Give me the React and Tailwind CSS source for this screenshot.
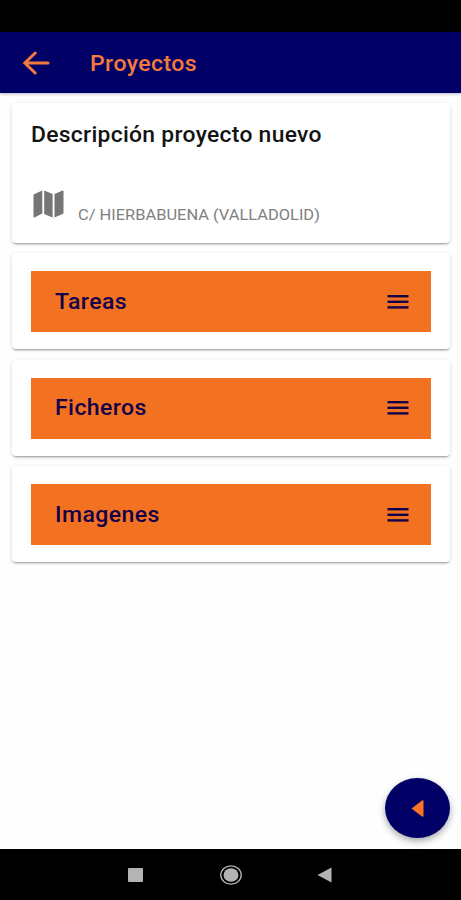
const sections = [
  { id: 'tareas', label: 'Tareas' },
  { id: 'ficheros', label: 'Ficheros' },
  { id: 'imagenes', label: 'Imagenes' },
];

function Card({ children, className = '' }) {
  return (
    <div className={`rounded-[4px] bg-white shadow-[0_2px_2px_-1px_rgba(0,0,0,0.35),0_1px_4px_rgba(0,0,0,0.13)] ${className}`}>
      {children}
    </div>
  );
}

function SectionCard({ label }) {
  return (
    <Card className="h-24 px-[19px] pt-[18px]">
      <button className="flex h-[61px] w-full items-center justify-between bg-[#f37221] pl-[23.5px] pr-[22px] text-[#14004a]">
        <span className="mt-px origin-left scale-x-[1.07] text-[21.5px] font-medium tracking-[0.4px]">{label}</span>
        <svg width="22" height="14" viewBox="0 0 22 14" fill="currentColor">
          <rect x="0.5" y="0" width="21" height="2.4" />
          <rect x="0.5" y="5.6" width="21" height="2.4" />
          <rect x="0.5" y="11.2" width="21" height="2.4" />
        </svg>
      </button>
    </Card>
  );
}

export default function App() {
  return (
    <div className="flex h-[900px] w-[461px] flex-col overflow-hidden bg-[#fefefe] font-['Roboto',sans-serif]">
      {/* Status bar */}
      <div className="h-8 shrink-0 bg-black"></div>

      {/* Header */}
      <header className="flex h-[61px] shrink-0 items-center bg-[#000066] pl-[22px] pt-px text-[#f37a3c] shadow-[0_1px_3px_rgba(0,0,60,0.3)]">
        <svg width="28" height="24" viewBox="0 0 28 24" fill="none" stroke="currentColor" strokeWidth="3" strokeLinecap="round">
          <path d="M26 12H3M13.2 2L2.8 12l10.4 10" />
        </svg>
        <h1 className="ml-[39.5px] mt-0.5 origin-left scale-x-[1.07] text-[21.5px] font-medium tracking-[0.4px]">Proyectos</h1>
      </header>

      <main className="flex min-h-0 flex-1 flex-col">
        <div className="flex flex-col gap-[10.5px] pl-3 pr-[11px] pt-[10px]">
          <Card className="h-[139.5px] px-[19px] pt-4">
            <h2 className="origin-left scale-x-[1.063] whitespace-nowrap text-[21.5px] font-medium leading-8 tracking-[0.28px] text-[#141414]">
              Descripción proyecto nuevo
            </h2>
            <div className="mt-[39px] flex items-start pl-[2px] text-[#757575]">
              <svg width="31" height="28" viewBox="0 0 31 28" fill="currentColor">
                <path d="M0.5 5.5Q0.5 4.5 1.5 4L9.3 0.5V23.5L2 27.3Q0.5 28 0.5 26.5Z" />
                <path d="M11.2 0.5L19.6 4V27.5L11.2 24Z" />
                <path d="M21.5 4L29 0.7Q30.5 0 30.5 1.5V22.5Q30.5 23.5 29.5 24L21.5 27.5Z" />
              </svg>
              <p className="ml-[14px] mt-[13px] origin-left scale-x-[1.06] whitespace-nowrap text-[15.5px] leading-6 text-[#808080]">
                C/ HIERBABUENA (VALLADOLID)
              </p>
            </div>
          </Card>

          {sections.map((s) => (
            <SectionCard key={s.id} label={s.label} />
          ))}
        </div>

        {/* Floating button */}
        <button className="mb-[11px] mr-[11px] mt-auto flex h-[60px] w-[65px] items-center justify-center self-end rounded-[50%] bg-[#000066] shadow-[0_3px_7px_rgba(0,0,0,0.35)]">
          <svg width="13" height="17" viewBox="0 0 13 17" fill="#f97325">
            <path d="M0.5 8.5L11 0.5Q12.5 0 12.5 1V16Q12.5 17 11 16.5Z" />
          </svg>
        </button>
      </main>

      {/* Android navigation */}
      <nav className="flex h-[51px] shrink-0 items-center bg-black pl-32 text-[#b4b4b4]">
        <svg width="15" height="14" viewBox="0 0 15 14" fill="currentColor">
          <rect width="15" height="14" rx="1" />
        </svg>
        <svg className="ml-[77px]" width="22" height="20" viewBox="0 0 22 20" fill="none" stroke="currentColor">
          <ellipse cx="11" cy="10" rx="10.2" ry="9.2" strokeWidth="1.3" />
          <ellipse cx="11" cy="10" rx="7.5" ry="6.8" fill="currentColor" stroke="none" />
        </svg>
        <svg className="ml-[75px]" width="15" height="16" viewBox="0 0 15 16" fill="currentColor">
          <path d="M0.5 8L14.5 0.5V15.5Z" />
        </svg>
      </nav>
    </div>
  );
}
